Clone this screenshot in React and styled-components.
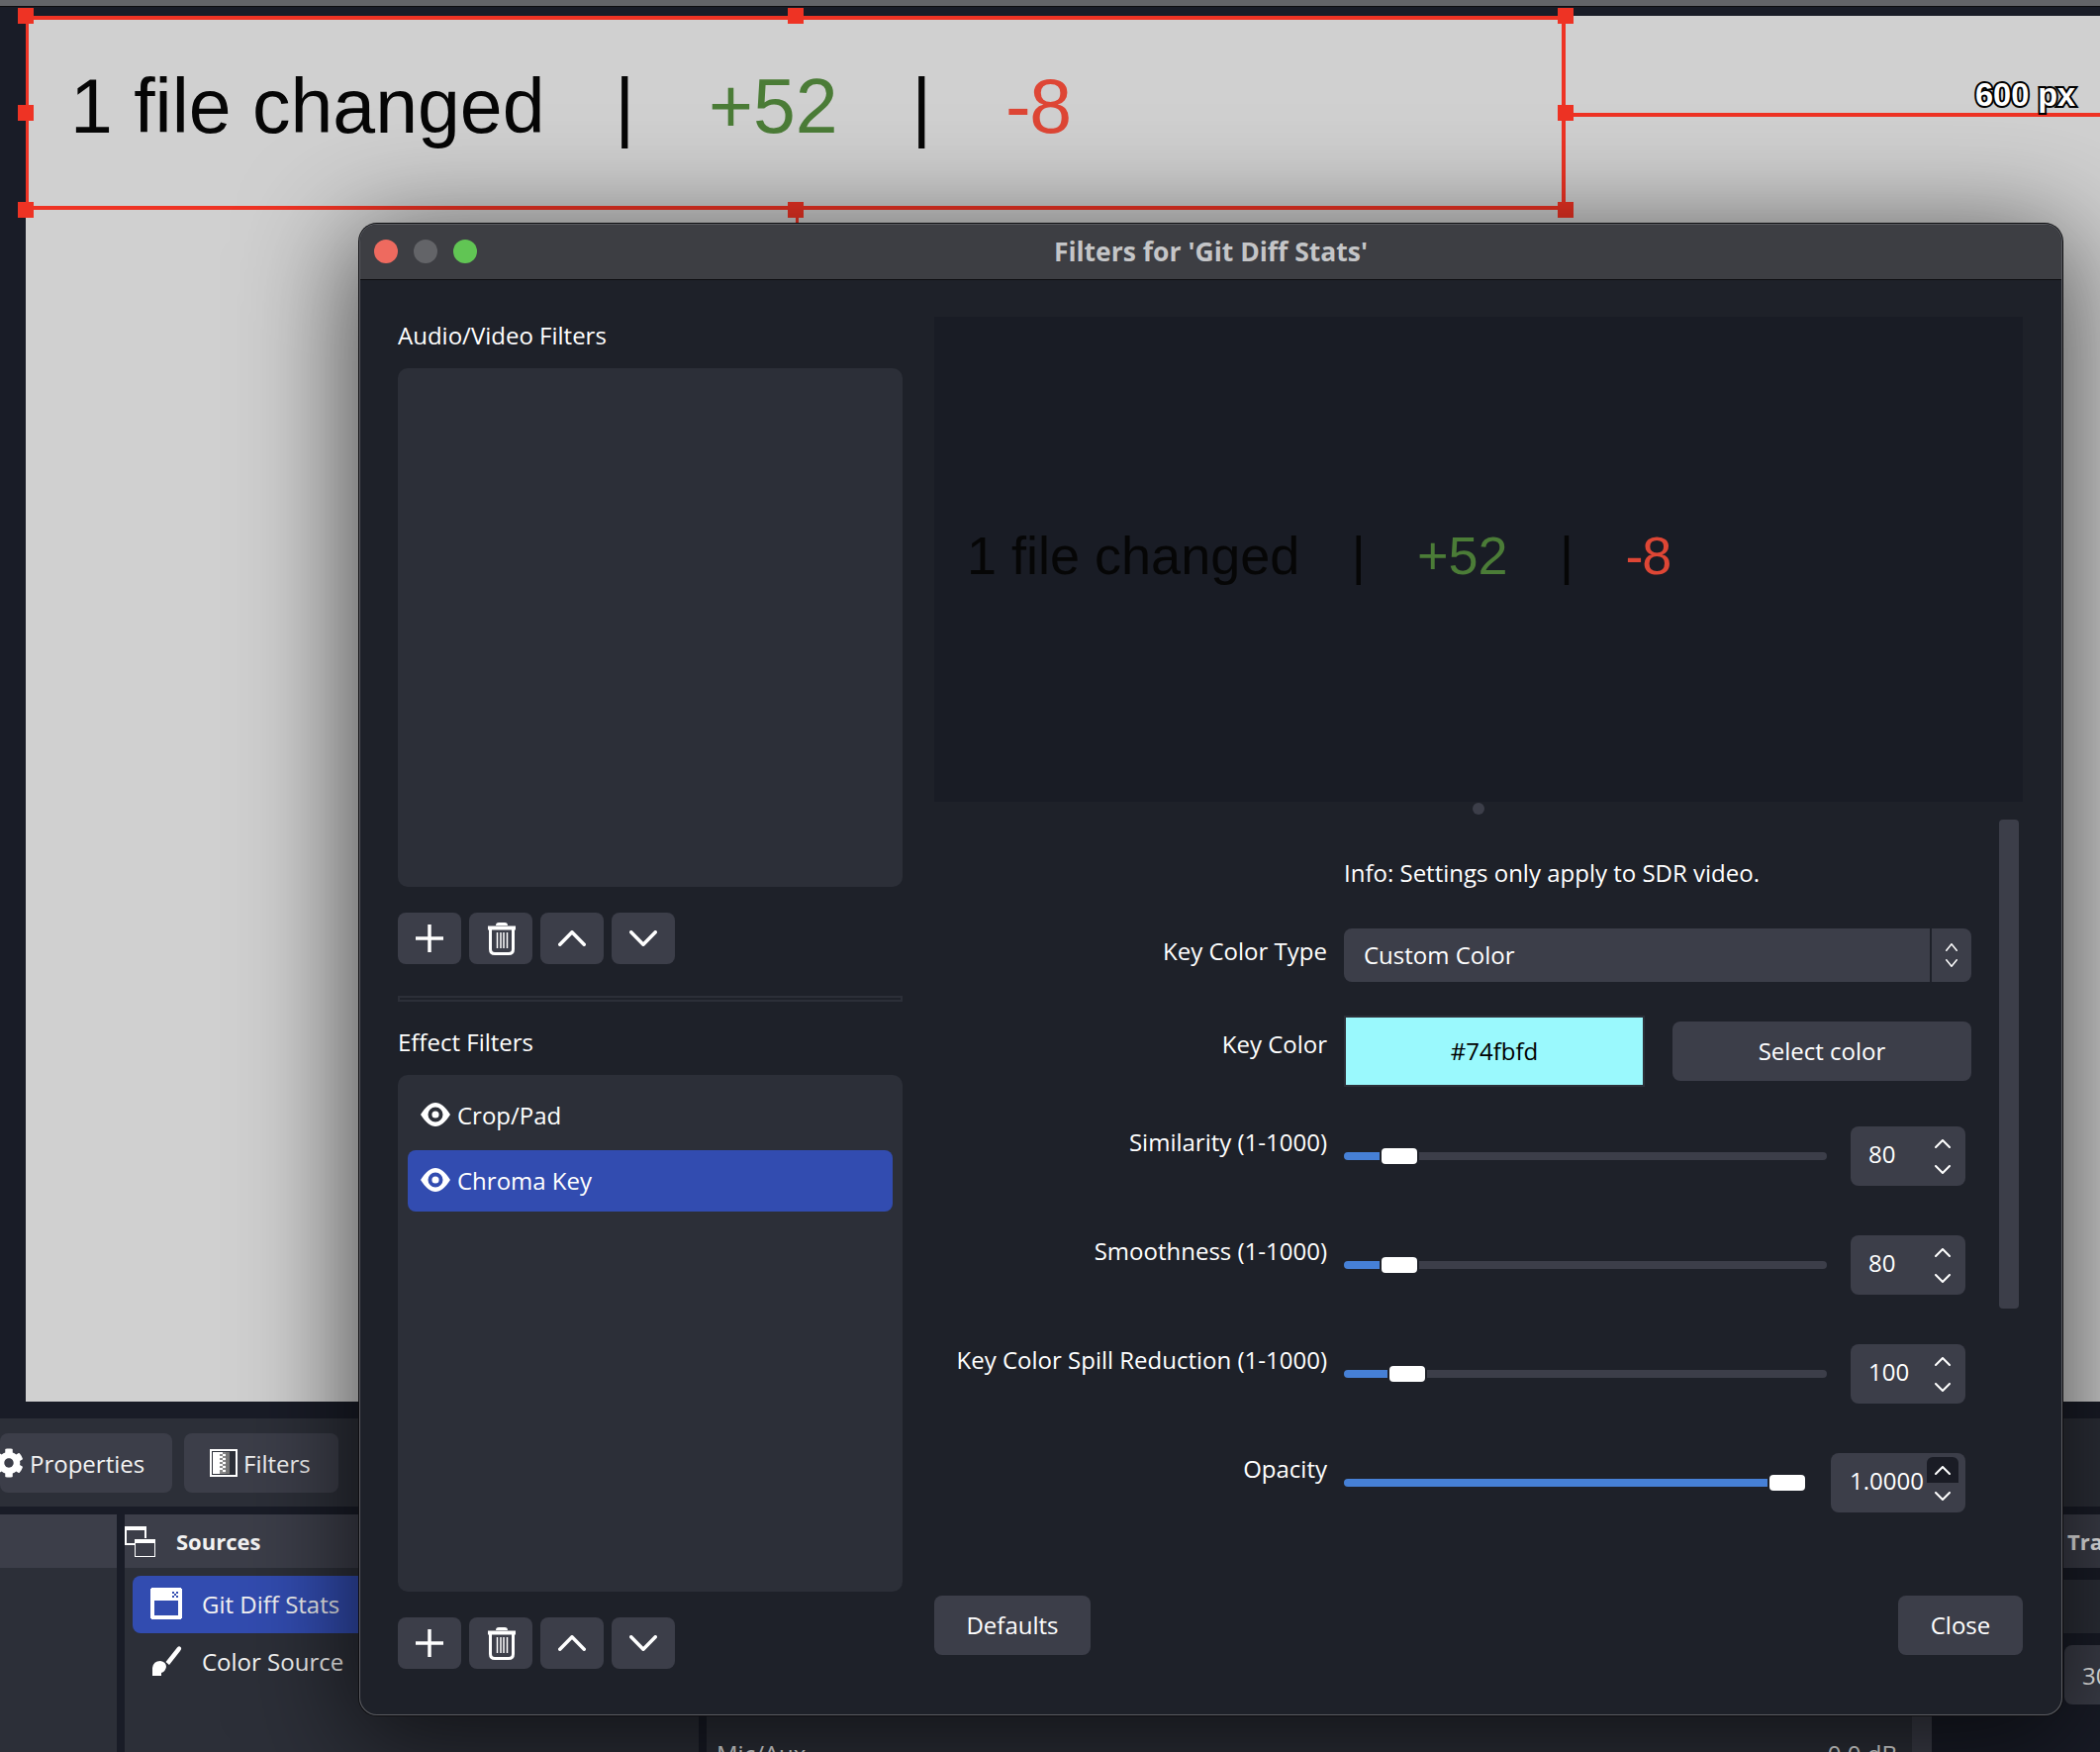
import React from 'react';
import styled, { createGlobalStyle } from 'styled-components';
import { FaCog } from 'react-icons/fa';

const GlobalStyle = createGlobalStyle`
    html, body { margin: 0; padding: 0; background: #191c27; }
    body { font-family: "Open Sans", "Noto Sans", sans-serif; color: #fff; }
`;

const Page = styled.div`
    position: relative;
    width: 2122px;
    height: 1770px;
    overflow: hidden;
    display: flex;
    flex-direction: column;
    background: #191c27;
`;

const TopStrip = styled.div`
    height: 6px;
    flex: none;
    background: #636468;
    border-bottom: 1px solid #0c0c0e;
`;

const PreviewArea = styled.div`
    height: 1409px;
    flex: none;
    box-sizing: border-box;
    padding: 9px 0 0 26px;
    display: flex;
`;

const Canvas = styled.div`
    position: relative;
    flex: 1;
    background: #d0d0d0;
`;

const Stats = styled.div`
    display: flex;
    align-items: baseline;
    gap: 0.97em;
    font-family: "Liberation Sans", Arial, sans-serif;
    font-size: ${p => p.$size}px;
    line-height: 1;
    color: #060606;
    white-space: nowrap;
`;

const CanvasStats = styled(Stats)`
    position: absolute;
    left: 45px;
    top: 53px;

    span:first-child {
        margin-right: -0.05em;
    }
`;

const Added = styled.span` color: #4b7c37; `;
const Removed = styled.span`
    color: #de4635;
    letter-spacing: -0.02em;
`;

const SelectionBox = styled.div`
    position: absolute;
    left: 0;
    top: 0;
    width: 1556px;
    height: 196px;
    box-sizing: border-box;
    border: 4px solid #ee3324;
    border-left-width: 3px;
`;

const Handle = styled.div`
    position: absolute;
    left: ${p => p.$x}px;
    top: ${p => p.$y}px;
    width: 16px;
    height: 16px;
    background: #ee3324;
`;

const HandleTick = styled.div`
    position: absolute;
    left: 778px;
    top: 204px;
    width: 3px;
    height: 6px;
    background: #ee3324;
`;

const GuideLine = styled.div`
    position: absolute;
    left: 1564px;
    top: 98px;
    right: 0;
    height: 4px;
    background: #ee3324;
`;

const SizeLabel = styled.div`
    position: absolute;
    left: 1970px;
    top: 58px;
    font-family: "Liberation Sans", Arial, sans-serif;
    font-weight: 700;
    font-size: 32.5px;
    line-height: 44px;
    white-space: nowrap;
    color: #fff;
    -webkit-text-stroke: 4px #000;
    paint-order: stroke fill;
`;

const Toolbar = styled.div`
    margin-top: 17px;
    height: 89px;
    flex: none;
    box-sizing: border-box;
    padding-top: 15px;
    display: flex;
    gap: 12px;
    align-items: flex-start;
    background: #2c2f38;
`;

const ToolButton = styled.div`
    width: ${p => p.$w}px;
    height: 60px;
    box-sizing: border-box;
    padding-left: ${p => p.$pad}px;
    display: flex;
    align-items: center;
    gap: 6px;
    background: #3c3e49;
    border-radius: 8px;
    font-size: 24px;
    color: #f2f2f2;
    overflow: hidden;
    white-space: nowrap;
`;

const Docks = styled.div`
    margin-top: 8px;
    flex: 1;
    min-height: 0;
    display: flex;
    gap: 8px;
`;

const Dock = styled.div`
    width: ${p => p.$w}px;
    flex: none;
    background: #2c2f38;
`;

const DockHeader = styled.div`
    height: 54px;
    display: flex;
    align-items: center;
    gap: 21px;
    background: #3c3e49;
    font-size: 22px;
    font-weight: 700;
    color: #f2f2f2;
    white-space: nowrap;
`;

const SourceList = styled.div`
    padding: 8px 0 0 8px;
    display: flex;
    flex-direction: column;
`;

const SourceRow = styled.div`
    height: 58px;
    box-sizing: border-box;
    padding: 0 0 2px 18px;
    display: flex;
    align-items: center;
    gap: 20px;
    border-radius: 8px 0 0 8px;
    background: ${p => (p.$selected ? '#324cb0' : 'transparent')};
    font-size: 24px;
    color: #f2f2f2;
    white-space: nowrap;
`;

const MixerDock = styled.div`
    flex: none;
    width: 1218px;
    box-sizing: border-box;
    padding: 226px 15px 0 10px;
    display: flex;
    justify-content: space-between;
    background: #2c2f38;
    font-size: 24px;
    line-height: 32px;
    color: #e6e6e6;
`;

const MixerScroll = styled.div`
    flex: none;
    width: 20px;
    margin-left: -8px;
    background: #3c3e49;
`;

const TransitionDock = styled.div`
    flex: 1;
    margin-left: 6px;
    display: flex;
    flex-direction: column;
`;

const TransitionHeader = styled(DockHeader)`
    flex: none;
    padding-left: 123px;
`;

const TransitionRow = styled.div`
    height: 54px;
    flex: none;
    margin-top: 12px;
    background: #2c2f38;
`;

const Duration = styled.div`
    height: 60px;
    flex: none;
    margin: 12px 0 0 120px;
    box-sizing: border-box;
    padding-left: 18px;
    display: flex;
    align-items: center;
    border-radius: 8px;
    background: #3c3e49;
    font-size: 24px;
    white-space: nowrap;
    color: #f2f2f2;
`;

const Window = styled.div`
    position: absolute;
    left: 363px;
    top: 226px;
    width: 1721px;
    height: 1507px;
    display: flex;
    flex-direction: column;
    overflow: hidden;
    background: #1e2129;
    border-radius: 18px;
    box-shadow: 0 0 0 1px #0d0d10, inset 0 0 0 1px #5c5d62;
`;

const WindowShadow = styled.div`
    position: absolute;
    left: 363px;
    top: 226px;
    width: 1721px;
    height: 1507px;
    border-radius: 18px;
    box-shadow: 0 20px 110px 10px rgba(0, 0, 0, 0.62);
`;

const TitleBar = styled.div`
    position: relative;
    flex: none;
    margin: 1px 1px 0;
    padding-bottom: 2px;
    height: 53px;
    display: flex;
    align-items: center;
    justify-content: center;
    background: #3d3e43;
    border-bottom: 1px solid #0d0d10;
    border-radius: 17px 17px 0 0;
    font-size: 26.5px;
    font-weight: 700;
    color: #c4c5c7;
`;

const Lights = styled.div`
    position: absolute;
    left: 14px;
    top: 15px;
    display: flex;
    gap: 16px;
`;

const Light = styled.div`
    width: 24px;
    height: 24px;
    border-radius: 50%;
    background: ${p => p.$color};
`;

const WindowBody = styled.div`
    flex: 1;
    min-height: 0;
    display: flex;
    gap: 32px;
    padding: 37px 40px 47px 39px;
`;

const LeftColumn = styled.div`
    width: 510px;
    flex: none;
    display: flex;
    flex-direction: column;
`;

const SectionLabel = styled.div`
    height: 38px;
    flex: none;
    margin-bottom: 14px;
    font-size: 24px;
    line-height: 38px;
    color: #fff;
`;

const FilterList = styled.div`
    height: ${p => p.$h}px;
    flex: none;
    box-sizing: border-box;
    padding: 10px 10px;
    display: flex;
    flex-direction: column;
    gap: 4px;
    background: #2c2f38;
    border-radius: 10px;
`;

const FilterItem = styled.div`
    height: 62px;
    box-sizing: border-box;
    padding: 0 0 2px 13px;
    display: flex;
    align-items: center;
    gap: 7px;
    border-radius: 8px;
    background: ${p => (p.$selected ? '#324cb0' : 'transparent')};
    font-size: 24px;
    color: #fff;
`;

const IconRow = styled.div`
    margin-top: 26px;
    flex: none;
    display: flex;
    gap: 8px;
`;

const IconButton = styled.div`
    width: 64px;
    height: 52px;
    display: flex;
    align-items: center;
    justify-content: center;
    background: #3c3e49;
    border-radius: 8px;

    svg.trash {
        margin-left: 2px;
    }
`;

const Divider = styled.div`
    height: 6px;
    flex: none;
    margin: 32px 0 22px;
    box-sizing: border-box;
    border: 2px solid #2c2f38;
`;

const RightColumn = styled.div`
    flex: 1;
    min-width: 0;
    display: flex;
    flex-direction: column;
`;

const FilterPreview = styled.div`
    height: 490px;
    flex: none;
    box-sizing: border-box;
    padding: 214px 0 0 33px;
    background: #191c25;
`;

const Splitter = styled.div`
    height: 18px;
    flex: none;
    display: flex;
    justify-content: center;
    padding-top: 1px;
    box-sizing: border-box;
`;

const SplitterDot = styled.div`
    width: 12px;
    height: 12px;
    border-radius: 50%;
    background: #3c3e49;
`;

const Properties = styled.div`
    height: 784px;
    flex: none;
    display: flex;
    align-items: flex-start;
    gap: 28px;
`;

const Form = styled.div`
    width: 1048px;
    flex: none;
    padding-top: 39px;
    display: flex;
    flex-direction: column;
`;

const ScrollThumb = styled.div`
    width: 20px;
    height: 494px;
    flex: none;
    border-radius: 4px;
    background: #3c3e49;
`;

const FormRow = styled.div`
    margin-top: ${p => p.$gap || 0}px;
    display: grid;
    grid-template-columns: 397px 634px;
    column-gap: 17px;
    align-items: start;
`;

const FieldLabel = styled.div`
    margin-top: ${p => p.$top || 0}px;
    font-size: 24px;
    line-height: 34px;
    text-align: right;
    white-space: nowrap;
    color: #fff;
`;

const InfoText = styled.div`
    margin: -2px 0 1px;
    font-size: 24px;
    line-height: 34px;
    color: #fff;
    white-space: nowrap;
`;

const SelectBox = styled.div`
    height: 54px;
    display: flex;
    background: #3c3e49;
    border-radius: 8px;
    font-size: 24px;
    color: #fff;
`;

const SelectValue = styled.div`
    flex: 1;
    padding: 0 0 2px 20px;
    display: flex;
    align-items: center;
`;

const SelectArrows = styled.div`
    width: 40px;
    flex: none;
    display: flex;
    flex-direction: column;
    align-items: center;
    justify-content: center;
    gap: 8px;
    border-left: 2px solid #1e2129;
`;

const ColorField = styled.div`
    height: 72px;
    display: flex;
    align-items: center;
    gap: 28px;
`;

const Swatch = styled.div`
    width: 304px;
    height: 72px;
    flex: none;
    box-sizing: border-box;
    padding-bottom: 2px;
    display: flex;
    align-items: center;
    justify-content: center;
    background: #9af9fd;
    border: 2px solid #2c2f38;
    font-size: 24px;
    color: #000;
`;

const PlainButton = styled.div`
    width: ${p => (p.$w ? `${p.$w}px` : 'auto')};
    flex: ${p => (p.$w ? 'none' : 1)};
    height: 60px;
    box-sizing: border-box;
    padding-bottom: 2px;
    display: flex;
    align-items: center;
    justify-content: center;
    background: #3c3e49;
    border-radius: 8px;
    font-size: 24px;
    color: #fff;
`;

const SliderField = styled.div`
    height: 60px;
    padding-right: 6px;
    display: flex;
    align-items: center;
    gap: ${p => p.$gap}px;
`;

const Slider = styled.div`
    flex: 1;
    display: flex;
    align-items: center;
    gap: 2px;
`;

const SliderFill = styled.div`
    height: 8px;
    flex: none;
    background: #4680d6;
    border-radius: 4px 0 0 4px;
`;

const SliderThumb = styled.div`
    width: 36px;
    height: 16px;
    flex: none;
    background: #fff;
    border-radius: 4px;
`;

const SliderRest = styled.div`
    flex: 1;
    height: 8px;
    background: #3c3e49;
    border-radius: 0 4px 4px 0;
`;

const SpinBox = styled.div`
    width: ${p => p.$w}px;
    height: 60px;
    flex: none;
    box-sizing: border-box;
    padding: 4px 7px 4px ${p => p.$pad}px;
    display: flex;
    align-items: center;
    justify-content: space-between;
    background: #3c3e49;
    border-radius: 8px;
    font-size: 24px;
    color: #fff;
`;

const SpinValue = styled.span`
    margin-bottom: 5px;
`;

const SpinButtons = styled.div`
    width: 32px;
    flex: none;
    display: flex;
    flex-direction: column;
`;

const SpinButton = styled.div`
    height: 26px;
    display: flex;
    align-items: center;
    justify-content: center;
    border-radius: 6px 6px 0 0;
    background: ${p => (p.$active ? '#1a1c25' : 'transparent')};
`;

const Footer = styled.div`
    flex: none;
    display: flex;
    justify-content: space-between;
`;

const Chevron = ({ up, w = 16, h = 9, sw = 2 }) => (
    <svg width={w} height={h} viewBox={`0 0 ${w} ${h}`} fill="none" stroke="#fff" strokeWidth={sw} strokeLinecap="round" strokeLinejoin="round">
        <polyline points={up ? `${sw / 2},${h - sw / 2} ${w / 2},${sw / 2} ${w - sw / 2},${h - sw / 2}` : `${sw / 2},${sw / 2} ${w / 2},${h - sw / 2} ${w - sw / 2},${sw / 2}`} />
    </svg>
);

const PlusIcon = () => (
    <svg width="28" height="28" viewBox="0 0 28 28" stroke="#fff" strokeWidth="3.5">
        <line x1="0" y1="14" x2="28" y2="14" />
        <line x1="14" y1="0" x2="14" y2="28" />
    </svg>
);

const TrashIcon = () => (
    <svg className="trash" width="30" height="33" viewBox="0 0 30 33" fill="none" stroke="#fff">
        <path d="M1 5.5 H29" strokeWidth="4" />
        <path d="M10 3 Q10 1 12 1 H18 Q20 1 20 3" strokeWidth="2" fill="#fff" />
        <path d="M3.5 7 V27 Q3.5 31.5 8 31.5 H22 Q26.5 31.5 26.5 27 V7" strokeWidth="3" />
        <path d="M10.5 10 V26 M14 10 V26 M17 10 V26 M20.5 10 V26" strokeWidth="1.5" />
    </svg>
);

const EyeIcon = () => (
    <svg width="30" height="24" viewBox="0 0 30 24">
        <path fillRule="evenodd" fill="#fff" d="M0 12 C5 4 10 0 15 0 C20 0 25 4 30 12 C25 20 20 24 15 24 C10 24 5 20 0 12 Z M15 4.5 A7.5 7.5 0 1 0 15 19.5 A7.5 7.5 0 1 0 15 4.5 Z" />
        <circle cx="15" cy="12" r="3.6" fill="#fff" />
    </svg>
);

const FiltersIcon = () => (
    <svg width="28" height="28" viewBox="0 0 28 28" shapeRendering="crispEdges" style={{ flex: 'none' }}>
        <rect x="1" y="1" width="26" height="26" fill="#2c2f38" stroke="#fff" strokeWidth="2" />
        <rect x="3" y="3" width="7" height="22" fill="#fff" />
        <rect x="10" y="3" width="6" height="22" fill="#8a8a8a" />
        {[3, 7, 11, 15, 19].map(y => <rect key={y} x="10" y={y} width="3" height="2" fill="#fff" />)}
        {[5, 9, 13, 17, 21].map(y => <rect key={y} x="13" y={y} width="3" height="2" fill="#fff" />)}
        <rect x="16" y="3" width="4" height="22" fill="#777" />
    </svg>
);

const SourcesIcon = () => (
    <svg width="31" height="31" viewBox="0 0 31 31" fill="none" stroke="#fff" shapeRendering="crispEdges" style={{ flex: 'none' }}>
        <path d="M1 1 H21 V12 M11 18 H1 V1" strokeWidth="1.5" />
        <rect x="0" y="0" width="21" height="4" fill="#fff" stroke="none" />
        <rect x="10.5" y="13.5" width="20" height="17" strokeWidth="1.5" fill="#3c3e49" />
        <rect x="10" y="13" width="21" height="4" fill="#fff" stroke="none" />
    </svg>
);

const WindowCaptureIcon = () => (
    <svg width="32" height="32" viewBox="0 0 32 32" shapeRendering="crispEdges" style={{ flex: 'none' }}>
        <rect width="32" height="32" rx="3" fill="#fff" />
        <rect x="4" y="13" width="24" height="15" fill="#324cb0" />
        <rect x="22" y="4" width="2" height="2" fill="#324cb0" />
        <rect x="26" y="4" width="2" height="2" fill="#324cb0" />
        <rect x="24" y="6" width="2" height="2" fill="#324cb0" />
        <rect x="22" y="8" width="2" height="2" fill="#324cb0" />
        <rect x="26" y="8" width="2" height="2" fill="#324cb0" />
    </svg>
);

const BrushIcon = () => (
    <svg width="32" height="32" viewBox="0 0 32 32" fill="#fff" style={{ flex: 'none' }}>
        <path d="M30.5 2 Q32 3.5 30 6 L19 20 L15.5 17 L27 2.5 Q29 0.5 30.5 2 Z" />
        <path d="M2 31 V23 Q3 16 10 16 Q16 17 16 22 Q15 27 11 28 V31 Z" />
    </svg>
);

const StatsLine = () => (
    <>
        <span>1 file changed</span>
        <span>|</span>
        <Added>+52</Added>
        <span>|</span>
        <Removed>-8</Removed>
    </>
);

const FilterButtons = () => (
    <IconRow>
        <IconButton><PlusIcon /></IconButton>
        <IconButton><TrashIcon /></IconButton>
        <IconButton><Chevron up w={28} h={16} sw={3.5} /></IconButton>
        <IconButton><Chevron w={28} h={16} sw={3.5} /></IconButton>
    </IconRow>
);

const handles = [
    [-8, -8], [770, -8], [1548, -8],
    [-8, 90], [1548, 90],
    [-8, 188], [770, 188], [1548, 188],
];

const sliders = [
    { label: 'Similarity (1-1000)', gap: 40, fill: 36, value: '80' },
    { label: 'Smoothness (1-1000)', gap: 50, fill: 36, value: '80' },
    { label: 'Key Color Spill Reduction (1-1000)', gap: 50, fill: 44, value: '100' },
    { label: 'Opacity', gap: 50, fill: 428, value: '1.0000', spinW: 136, spinPad: 19, fieldGap: 26, rest: false, active: true },
];

const SliderRow = ({ label, gap, fill, value, spinW = 116, spinPad = 18, fieldGap = 24, rest = true, active }) => (
    <FormRow $gap={gap}>
        <FieldLabel $top={-1}>{label}</FieldLabel>
        <SliderField $gap={fieldGap}>
            <Slider>
                <SliderFill style={{ width: fill }} />
                <SliderThumb />
                {rest && <SliderRest />}
            </Slider>
            <SpinBox $w={spinW} $pad={spinPad}>
                <SpinValue>{value}</SpinValue>
                <SpinButtons>
                    <SpinButton $active={active}><Chevron up /></SpinButton>
                    <SpinButton><Chevron /></SpinButton>
                </SpinButtons>
            </SpinBox>
        </SliderField>
    </FormRow>
);

export default function App() {
    return (
        <Page>
            <GlobalStyle />
            <TopStrip />
            <PreviewArea>
                <Canvas>
                    <CanvasStats $size={77}><StatsLine /></CanvasStats>
                    <SelectionBox />
                    <GuideLine />
                    <HandleTick />
                    {handles.map(([x, y]) => <Handle key={`${x}-${y}`} $x={x} $y={y} />)}
                    <SizeLabel>600 px</SizeLabel>
                </Canvas>
            </PreviewArea>
            <Toolbar>
                <ToolButton $w={174} $pad={0}>
                    <FaCog size={30} color="#fff" style={{ marginLeft: -6, flex: 'none' }} />
                    Properties
                </ToolButton>
                <ToolButton $w={156} $pad={26}>
                    <FiltersIcon />
                    Filters
                </ToolButton>
            </Toolbar>
            <Docks>
                <Dock $w={118}>
                    <DockHeader />
                </Dock>
                <Dock $w={580}>
                    <DockHeader>
                        <SourcesIcon />
                        Sources
                    </DockHeader>
                    <SourceList>
                        <SourceRow $selected>
                            <WindowCaptureIcon />
                            Git Diff Stats
                        </SourceRow>
                        <SourceRow>
                            <BrushIcon />
                            Color Source
                        </SourceRow>
                    </SourceList>
                </Dock>
                <MixerDock>
                    <span>Mic/Aux</span>
                    <span>0.0 dB</span>
                </MixerDock>
                <MixerScroll />
                <TransitionDock>
                    <TransitionHeader>Transitions</TransitionHeader>
                    <TransitionRow />
                    <Duration>300 ms</Duration>
                </TransitionDock>
            </Docks>

            <WindowShadow />
            <Window>
                <TitleBar>
                    <Lights>
                        <Light $color="#ee6a5f" />
                        <Light $color="#636468" />
                        <Light $color="#61c554" />
                    </Lights>
                    Filters for 'Git Diff Stats'
                </TitleBar>
                <WindowBody>
                    <LeftColumn>
                        <SectionLabel>Audio/Video Filters</SectionLabel>
                        <FilterList $h={524} />
                        <FilterButtons />
                        <Divider />
                        <SectionLabel>Effect Filters</SectionLabel>
                        <FilterList $h={522}>
                            <FilterItem><EyeIcon />Crop/Pad</FilterItem>
                            <FilterItem $selected><EyeIcon />Chroma Key</FilterItem>
                        </FilterList>
                        <FilterButtons />
                    </LeftColumn>
                    <RightColumn>
                        <FilterPreview>
                            <Stats $size={54}><StatsLine /></Stats>
                        </FilterPreview>
                        <Splitter><SplitterDot /></Splitter>
                        <Properties>
                            <Form>
                                <FormRow>
                                    <span />
                                    <InfoText>Info: Settings only apply to SDR video.</InfoText>
                                </FormRow>
                                <FormRow $gap={38}>
                                    <FieldLabel $top={6}>Key Color Type</FieldLabel>
                                    <SelectBox>
                                        <SelectValue>Custom Color</SelectValue>
                                        <SelectArrows>
                                            <Chevron up w={12} h={8} sw={1.5} />
                                            <Chevron w={12} h={8} sw={1.5} />
                                        </SelectArrows>
                                    </SelectBox>
                                </FormRow>
                                <FormRow $gap={34}>
                                    <FieldLabel $top={12}>Key Color</FieldLabel>
                                    <ColorField>
                                        <Swatch>#74fbfd</Swatch>
                                        <PlainButton>Select color</PlainButton>
                                    </ColorField>
                                </FormRow>
                                {sliders.map(s => <SliderRow key={s.label} {...s} />)}
                            </Form>
                            <ScrollThumb />
                        </Properties>
                        <Footer>
                            <PlainButton $w={158}>Defaults</PlainButton>
                            <PlainButton $w={126}>Close</PlainButton>
                        </Footer>
                    </RightColumn>
                </WindowBody>
            </Window>
        </Page>
    );
}
